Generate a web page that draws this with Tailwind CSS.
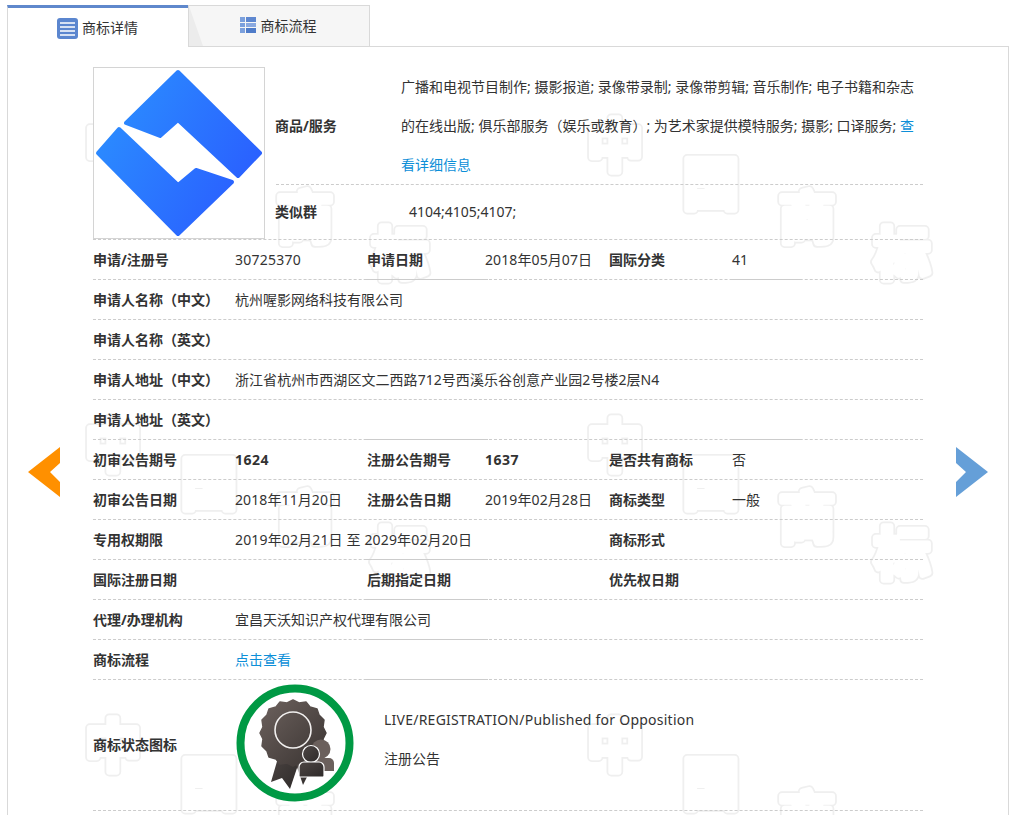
<!DOCTYPE html>
<html lang="zh">
<head>
<meta charset="utf-8">
<script src="https://cdn.jsdelivr.net/npm/@tailwindcss/browser@4"></script>
</head>
<body class="bg-white overflow-hidden">
<div class="relative w-[1016px] h-[815px] overflow-hidden pt-[5px] px-[7px] text-[14px] text-[#333] font-['Noto_Sans','Noto_Sans_CJK_SC',sans-serif]">
  <!-- tabs -->
  <div class="flex h-[41px] relative z-10">
    <div class="w-[181px] h-[42px] bg-white border-l border-[#d9d9d9] border-t-[3px] border-t-[#5f88cc] flex items-center justify-center gap-[4px] pb-[2px] pr-[1px]">
      <svg width="21" height="21" viewBox="0 0 21 21" class="mt-[4px]"><rect width="21" height="21" rx="3" fill="#5b86cf"/><path d="M3 5h15M3 9h15M3 13h15M3 17h15" stroke="#fff" stroke-width="1.6"/></svg>
      <span class="mt-[1px]">商标详情</span>
    </div>
    <div class="relative w-[182px] h-[41px] bg-[#f6f6f6] border border-[#d9d9d9] border-b-0 flex items-center justify-center gap-[5px] pb-[2px] pr-[2px]">
      <div class="absolute left-0 top-0 w-[14px] h-[40px] bg-[#ececec] [clip-path:polygon(0_0,100%_100%,0_100%)]"></div>
      <svg width="16" height="16" viewBox="0 0 16 16" class="-mt-[1px]"><path d="M0 0h5v5H0zM0 6h5v4H0zM0 11h5v5H0z" fill="#7ba0dd"/><path d="M6 0h10v5H6z" fill="#5f88d0"/><path d="M6 6h10v4H6z" fill="#8aa9e0"/><path d="M6 11h10v5H6z" fill="#4f7cc9"/></svg>
      <span>商标流程</span>
    </div>
  </div>
  <!-- panel -->
  <div class="relative h-[800px] border border-[#d9d9d9] pt-[20px] pl-[85px]">
    <!-- watermark -->
    <svg class="absolute left-[-8px] top-[-47px]" width="1016" height="815">
      <defs>
        <pattern id="wm" width="502" height="300" patternUnits="userSpaceOnUse">
          <g font-family="'Noto Sans CJK SC',sans-serif" font-weight="700" font-size="56" text-anchor="middle" stroke-linejoin="round" stroke-linecap="round">
            <g stroke="#efefef" stroke-width="9.5" fill="#efefef">
              <text x="113" y="166">中</text><text x="209" y="204">国</text><text x="305" y="238">商</text><text x="400" y="274">标</text>
            </g>
            <g stroke="#ffffff" stroke-width="6" fill="#ffffff">
              <text x="113" y="166">中</text><text x="209" y="204">国</text><text x="305" y="238">商</text><text x="400" y="274">标</text>
            </g>
          </g>
        </pattern>
      </defs>
      <rect x="8" y="47" width="1000" height="768" fill="url(#wm)"/>
    </svg>

    <div class="relative w-[830px]">
      <!-- top block -->
      <div class="flex h-[173px] border-b border-dashed border-[#ccc]">
        <div class="w-[172px] h-[172px] border border-[#d4d4d4] shrink-0 bg-white">
          <svg width="170" height="170" viewBox="94 68 170 170">
            <defs>
              <linearGradient id="lg" gradientUnits="userSpaceOnUse" x1="96" y1="100" x2="262" y2="190">
                <stop offset="0" stop-color="#2b90ff"/><stop offset="1" stop-color="#2a5cff"/>
              </linearGradient>
            </defs>
            <g fill="url(#lg)" stroke="url(#lg)" stroke-width="4" stroke-linejoin="round">
              <path d="M126 123L178 72L260 153L238 176L178 120L160 136Z"/>
              <path d="M98 153L119 129L178 185L196 170L232 182L178 234Z"/>
            </g>
          </svg>
        </div>
        <div class="flex-1 pl-[11px]">
          <div class="flex h-[118px] border-b border-dashed border-[#ccc] items-center">
            <div class="w-[126px] -ml-px font-bold shrink-0">商品/服务</div>
            <div class="leading-[39px] whitespace-nowrap">广播和电视节目制作; 摄影报道; 录像带录制; 录像带剪辑; 音乐制作; 电子书籍和杂志<br>的在线出版; 俱乐部服务（娱乐或教育）; 为艺术家提供模特服务; 摄影; 口译服务; <span class="text-[#0d8fd8]">查<br>看详细信息</span></div>
          </div>
          <div class="flex h-[54px] items-center">
            <div class="w-[133px] -ml-px mr-px font-bold shrink-0 -mt-[2px]">类似群</div>
            <div class="-mt-[2px]">4104;4105;4107;</div>
          </div>
        </div>
      </div>

      <div class="flex h-[40px] items-center border-b border-dashed border-[#ccc]">
        <div class="w-[142px] font-bold">申请/注册号</div>
        <div class="w-[130px] tracking-[0.25px]">30725370</div>
        <div class="w-[123px] self-stretch flex items-center pl-[2px] -mb-px border-b border-[#ccc] font-bold">申请日期</div>
        <div class="w-[124px] -ml-[3px] whitespace-nowrap tracking-[0.1px]">2018年05月07日</div>
        <div class="w-[123px] font-bold">国际分类</div>
        <div class="w-[70px] self-stretch flex items-center -mb-px border-b border-[#ccc]">41</div>
      </div>
      <div class="flex h-[40px] items-center border-b border-dashed border-[#ccc]">
        <div class="w-[142px] font-bold">申请人名称（中文）</div>
        <div>杭州喔影网络科技有限公司</div>
      </div>
      <div class="flex h-[40px] items-center border-b border-dashed border-[#ccc]">
        <div class="w-[142px] font-bold">申请人名称（英文）</div>
      </div>
      <div class="flex h-[40px] items-center border-b border-dashed border-[#ccc]">
        <div class="w-[142px] font-bold">申请人地址（中文）</div>
        <div class="tracking-[0.05px]">浙江省杭州市西湖区文二西路712号西溪乐谷创意产业园2号楼2层N4</div>
      </div>
      <div class="flex h-[40px] items-center border-b border-dashed border-[#ccc]">
        <div class="w-[142px] font-bold">申请人地址（英文）</div>
        <div class="w-[130px]"></div>
        <div class="w-[123px] self-stretch -mb-px border-b border-[#ccc]"></div>
        <div class="w-[242px]"></div>
        <div class="w-[70px] self-stretch -mb-px border-b border-[#ccc]"></div>
      </div>
      <div class="flex h-[40px] items-center border-b border-dashed border-[#ccc]">
        <div class="w-[142px] font-bold">初审公告期号</div>
        <div class="w-[132px] font-bold tracking-[0.5px]">1624</div>
        <div class="w-[118px] font-bold">注册公告期号</div>
        <div class="w-[124px] font-bold tracking-[0.5px]">1637</div>
        <div class="w-[123px] font-bold">是否共有商标</div>
        <div>否</div>
      </div>
      <div class="flex h-[40px] items-center border-b border-dashed border-[#ccc]">
        <div class="w-[142px] font-bold">初审公告日期</div>
        <div class="w-[132px] whitespace-nowrap tracking-[0.1px]">2018年11月20日</div>
        <div class="w-[118px] font-bold">注册公告日期</div>
        <div class="w-[124px] whitespace-nowrap tracking-[0.1px]">2019年02月28日</div>
        <div class="w-[123px] font-bold">商标类型</div>
        <div>一般</div>
      </div>
      <div class="relative flex h-[40px] items-center border-b border-dashed border-[#ccc]">
        <div class="w-[142px] font-bold">专用权期限</div>
        <div class="w-[374px] whitespace-nowrap tracking-[0.15px]">2019年02月21日 至 2029年02月20日</div>
        <div class="w-[123px] font-bold">商标形式</div>
        <div class="absolute left-[272px] bottom-[-1px] w-[123px] border-b border-[#ccc]"></div>
      </div>
      <div class="flex h-[40px] items-center border-b border-dashed border-[#ccc]">
        <div class="w-[142px] font-bold">国际注册日期</div>
        <div class="w-[130px]"></div>
        <div class="w-[123px] self-stretch flex items-center pl-[2px] -mb-px border-b border-[#ccc] font-bold">后期指定日期</div>
        <div class="w-[121px]"></div>
        <div class="w-[123px] font-bold">优先权日期</div>
      </div>
      <div class="relative flex h-[40px] items-center border-b border-dashed border-[#ccc]">
        <div class="w-[142px] font-bold">代理/办理机构</div>
        <div class="whitespace-nowrap">宜昌天沃知识产权代理有限公司</div>
        <div class="absolute left-[272px] bottom-[-1px] w-[123px] border-b border-[#ccc]"></div>
      </div>
      <div class="relative flex h-[40px] items-center border-b border-dashed border-[#ccc]">
        <div class="w-[142px] font-bold">商标流程</div>
        <div class="text-[#0d8fd8]">点击查看</div>
        <div class="absolute left-[272px] bottom-[-1px] w-[123px] border-b border-[#ccc]"></div>
      </div>
      <div class="flex h-[131px] items-center border-b border-dashed border-[#ccc]">
        <div class="w-[142px] font-bold -mt-[2px]">商标状态图标</div>
        <svg class="shrink-0 -mt-[4px]" width="120" height="120" viewBox="235 684 120 120">
          <defs>
            <linearGradient id="bd" x1="0" y1="0" x2="1" y2="1"><stop offset="0" stop-color="#6d625e"/><stop offset="1" stop-color="#393331"/></linearGradient>
            <linearGradient id="pp" x1="0" y1="0" x2="1" y2="1"><stop offset="0" stop-color="#4d4644"/><stop offset="1" stop-color="#2e2a29"/></linearGradient>
          </defs>
          <circle cx="295" cy="744" r="54.5" fill="#fff" stroke="#009944" stroke-width="8"/>
          <path d="M280 752L271 783L282 779L290 790L300 760Z" fill="url(#pp)"/>
          <path d="M296 765L303 786L307 778L310 765Z" fill="url(#pp)"/>
          <path fill="url(#bd)" stroke="url(#bd)" stroke-width="1.5" stroke-linejoin="round" d="M293 701l6 3 7-1 4 5 7 2 2 6 5 5-1 7 3 6-3 6 1 7-5 5-2 6-7 2-4 5-7-1-6 3-6-3-7 1-4-5-7-2-2-6-5-5 1-7-3-6 3-6-1-7 5-5 2-6 7-2 4-5 7 1z"/>
          <circle cx="293" cy="731" r="18" fill="none" stroke="#f2f0ef" stroke-width="1.6"/>
          <circle cx="321" cy="750" r="9.5" fill="#6b605c"/>
          <path d="M312 759h17a5 5 0 0 1 5 5v8h-22z" fill="#6b605c"/>
          <circle cx="311" cy="755" r="8.5" fill="url(#pp)" stroke="#fff" stroke-width="1.2"/>
          <path d="M304 763h15a5 5 0 0 1 5 5v9a1 1 0 0 1-1 1h-23a1 1 0 0 1-1-1v-9a5 5 0 0 1 5-5z" fill="url(#pp)" stroke="#fff" stroke-width="1.2"/>
        </svg>
        <div class="ml-[29px] -mt-[13px] leading-[39px]">
          <div class="tracking-[0.24px]">LIVE/REGISTRATION/Published for Opposition</div>
          <div>注册公告</div>
        </div>
      </div>
    </div>
  </div>
  <!-- arrows -->
  <svg class="absolute left-[28px] top-[447px]" width="32" height="50" viewBox="0 0 32 50"><path d="M0 25L32 0V16L22 25L32 35V50Z" fill="#ff9000"/></svg>
  <svg class="absolute left-[956px] top-[447px]" width="32" height="50" viewBox="0 0 32 50"><path d="M32 25L0 0V16L10 25L0 35V50Z" fill="#659fd8"/></svg>
</div>
</body>
</html>
